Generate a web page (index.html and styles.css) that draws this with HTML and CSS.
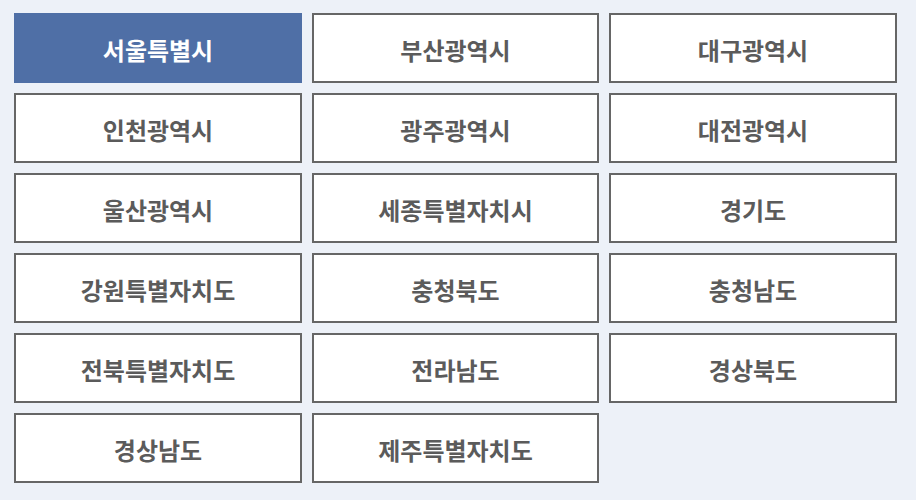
FILE: index.html
```html
<!DOCTYPE html>
<html lang="ko">
<head>
<meta charset="utf-8">
<title>지역 선택</title>
<link rel="stylesheet" href="styles.css">
</head>
<body>
<ul class="regions">
  <li><a class="region active" href="#">서울특별시</a></li>
  <li><a class="region" href="#">부산광역시</a></li>
  <li><a class="region" href="#">대구광역시</a></li>
  <li><a class="region" href="#">인천광역시</a></li>
  <li><a class="region" href="#">광주광역시</a></li>
  <li><a class="region" href="#">대전광역시</a></li>
  <li><a class="region" href="#">울산광역시</a></li>
  <li><a class="region" href="#">세종특별자치시</a></li>
  <li><a class="region" href="#">경기도</a></li>
  <li><a class="region" href="#">강원특별자치도</a></li>
  <li><a class="region" href="#">충청북도</a></li>
  <li><a class="region" href="#">충청남도</a></li>
  <li><a class="region" href="#">전북특별자치도</a></li>
  <li><a class="region" href="#">전라남도</a></li>
  <li><a class="region" href="#">경상북도</a></li>
  <li><a class="region" href="#">경상남도</a></li>
  <li><a class="region" href="#">제주특별자치도</a></li>
</ul>
</body>
</html>
```
FILE: styles.css
```css
html, body {
  margin: 0;
  padding: 0;
  background: #edf1f8;
  height: 100%;
}
body {
  font-family: "Noto Sans CJK KR", "Noto Sans", sans-serif;
}
.regions {
  list-style: none;
  margin: 0;
  padding: 13px 0 0 14px;
  display: grid;
  grid-template-columns: 288px 287px 288px;
  gap: 10px;
}
.regions li {
  margin: 0;
}
.region {
  box-sizing: border-box;
  display: flex;
  align-items: center;
  justify-content: center;
  height: 70px;
  padding-top: 3px;
  background: #ffffff;
  border: 2px solid #666666;
  color: #5b5b5b;
  font-size: 24px;
  font-weight: 700;
  letter-spacing: 0;
  text-decoration: none;
}
.region.active {
  background: #4f6fa6;
  border-color: #4f6fa6;
  color: #ffffff;
}
```
